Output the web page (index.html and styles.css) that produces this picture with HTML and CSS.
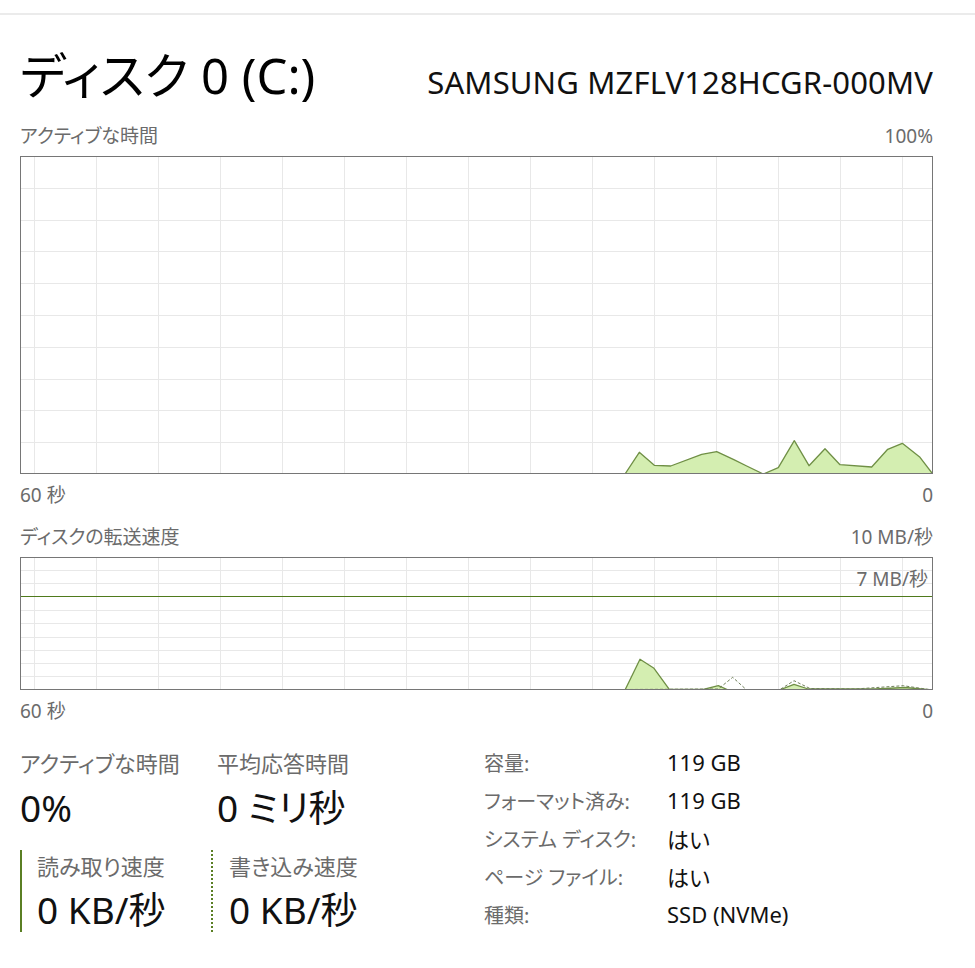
FILE: index.html
```html
<!DOCTYPE html>
<html lang="ja">
<head>
  <meta charset="UTF-8">
  <meta name="viewport" content="width=device-width, initial-scale=1">
  <title>ディスク 0 (C:)</title>
  <link rel="stylesheet" href="styles.css">
</head>
<body>

  <div class="topbar"></div>

  <div class="page">
    <!-- Header -->
    <div class="header">
      <div class="title">ディスク 0 (C:)</div>
      <div class="model">SAMSUNG MZFLV128HCGR-000MV</div>
    </div>

    <!-- Active time chart -->
    <div class="chart-label first">
      <span>アクティブな時間</span>
      <span>100%</span>
    </div>
    <svg class="chart" width="913" height="318" viewBox="0 0 913 318">
      <g class="grid">
        <path d="M14.5 0V318M76.5 0V318M138.5 0V318M200.5 0V318M262.5 0V318M324.5 0V318M386.5 0V318M448.5 0V318M510.5 0V318M572.5 0V318M634.5 0V318M696.5 0V318M758.5 0V318M820.5 0V318M882.5 0V318"/>
        <path d="M0 32.5H913M0 64.5H913M0 95.5H913M0 127.5H913M0 159.5H913M0 191.5H913M0 223.5H913M0 254.5H913M0 286.5H913"/>
      </g>
      <polygon class="area" points="605,318 619.3,296.3 634.3,309.3 650.7,310 681.7,298.3 696.7,295.7 713.3,303.3 726.7,310 743.3,318 758.3,311.7 774.3,284.7 789,309.7 805,292.7 820,308.7 851.7,311 867.7,293.3 882.3,287.3 900,301.3 912.7,318"/>
      <rect class="frame" x="0.5" y="0.5" width="912" height="317"/>
    </svg>
    <div class="chart-label axis">
      <span>60 秒</span>
      <span>0</span>
    </div>

    <!-- Transfer rate chart -->
    <div class="chart-label second">
      <span>ディスクの転送速度</span>
      <span>10 MB/秒</span>
    </div>
    <div class="chart-wrap">
      <svg class="chart" width="913" height="133" viewBox="0 0 913 133">
        <g class="grid">
          <path d="M14.5 0V133M76.5 0V133M138.5 0V133M200.5 0V133M262.5 0V133M324.5 0V133M386.5 0V133M448.5 0V133M510.5 0V133M572.5 0V133M634.5 0V133M696.5 0V133M758.5 0V133M820.5 0V133M882.5 0V133"/>
          <path d="M0 13.5H913M0 26.5H913M0 53.5H913M0 66.5H913M0 80.5H913M0 93.5H913M0 106.5H913M0 119.5H913"/>
        </g>
        <path class="limit" d="M0 39.5H913"/>
        <polygon class="area" points="605,133 620,102.3 634,111.3 649.3,132.3 683.3,132.5 698.3,128.7 708.3,133 759.3,133 774,127.3 788.3,132 855,132 885,130.5 912,133"/>
        <polyline class="write" points="605,132.5 698.3,132 712.7,120.3 726.7,133 759.3,133 774,123.7 790,131.5 835,132 883.3,128.7 912,133"/>
        <rect class="frame" x="0.5" y="0.5" width="912" height="132"/>
      </svg>
      <div class="limit-label">7 MB/秒</div>
    </div>
    <div class="chart-label axis">
      <span>60 秒</span>
      <span>0</span>
    </div>

    <!-- Stats -->
    <div class="stats">
      <div class="stats-left">
        <div class="stat">
          <div class="stat-name">アクティブな時間</div>
          <div class="stat-value">0%</div>
        </div>
        <div class="stat shift">
          <div class="stat-name">平均応答時間</div>
          <div class="stat-value">0 ミリ秒</div>
        </div>
        <div class="stat read">
          <div class="stat-name">読み取り速度</div>
          <div class="stat-value">0 KB/秒</div>
        </div>
        <div class="stat write">
          <div class="stat-name">書き込み速度</div>
          <div class="stat-value">0 KB/秒</div>
        </div>
      </div>

      <div class="stats-right">
        <span class="key">容量:</span><span class="val">119 GB</span>
        <span class="key">フォーマット済み:</span><span class="val">119 GB</span>
        <span class="key">システム ディスク:</span><span class="val">はい</span>
        <span class="key">ページ ファイル:</span><span class="val">はい</span>
        <span class="key">種類:</span><span class="val">SSD (NVMe)</span>
      </div>
    </div>
  </div>

</body>
</html>
```

FILE: styles.css
```css
body {
  font-family: "Noto Sans", "Noto Sans CJK JP", sans-serif;
  font-feature-settings: "palt";
  background: #fff;
  color: #111;
  margin: 0;
}

.topbar {
  height: 13px;
  border-bottom: 2px solid #ebebeb;
}

.page {
  padding: 0 42px 0 20px;
}

/* Header */
.header {
  display: flex;
  justify-content: space-between;
  align-items: flex-start;
  margin-top: 30px;
  height: 60px;
}

.title {
  font-size: 49px;
  line-height: 60px;
  color: #000;
}

.model {
  font-size: 31px;
  line-height: 30px;
  letter-spacing: 0.15px;
  margin-top: 22px;
  color: #111;
}

/* Chart labels */
.chart-label {
  display: flex;
  justify-content: space-between;
  font-size: 19px;
  line-height: 24px;
  color: #6b6b6b;
}

.chart-label.first {
  margin-top: 19px;
  margin-bottom: 8px;
}

.chart-label.second {
  margin-top: 18px;
  margin-bottom: 8px;
}

.chart-label.axis {
  margin-top: 9px;
}

.chart {
  display: block;
}

.chart .grid path {
  stroke: #e8e8e8;
  stroke-width: 1;
  fill: none;
}

.chart .frame {
  fill: none;
  stroke: #767676;
  stroke-width: 1;
}

.chart .area {
  fill: #d4eeb1;
  stroke: #6f8f45;
  stroke-width: 1.3;
  stroke-linejoin: round;
}

.chart .limit {
  stroke: #4f7a1c;
  stroke-width: 1.2;
}

.chart .write {
  fill: none;
  stroke: #6f7f5a;
  stroke-width: 1;
  stroke-dasharray: 3 2;
}

.chart-wrap {
  position: relative;
}

.limit-label {
  position: absolute;
  top: 10px;
  right: 5px;
  font-size: 19px;
  line-height: 24px;
  color: #6b6b6b;
}

/* Stats */
.stats {
  display: flex;
  margin-top: 20px;
}

.stats-left {
  display: grid;
  grid-template-columns: 191px 200px;
  width: 464px;
  padding-top: 6px;
  align-content: start;
}

.stat-name {
  font-size: 22px;
  line-height: 28px;
  color: #6b6b6b;
}

.stat-value {
  font-size: 37px;
  line-height: 40px;
  margin-top: 11px;
  color: #111;
}

.stat.shift {
  padding-left: 6px;
}

.stat.read,
.stat.write {
  margin-top: 22px;
  padding: 2px 0 2px 15px;
  border-left: 2px solid #5a7f24;
}

.stat.read .stat-value,
.stat.write .stat-value {
  margin-top: 10px;
}

.stat.write {
  border-left: 2px dotted #5a7f24;
  padding-left: 16px;
}

.stats-right {
  display: grid;
  grid-template-columns: 183px auto;
  grid-auto-rows: 38px;
  align-items: center;
  font-size: 20px;
}

.stats-right .key {
  color: #6b6b6b;
}

.stats-right .val {
  font-size: 22px;
  color: #111;
}
```
